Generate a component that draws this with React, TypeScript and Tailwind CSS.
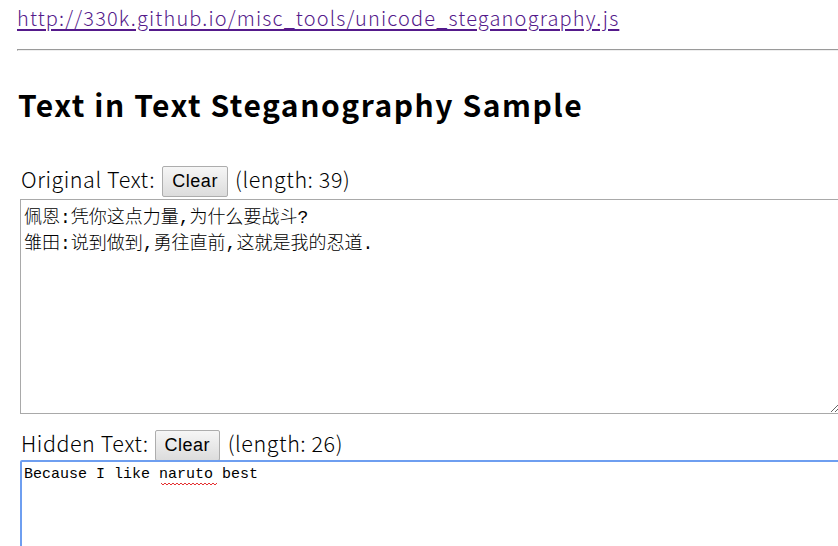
import React from "react";

const jp = { fontFamily: '"Noto Sans CJK JP", "Noto Sans", sans-serif' };

function ClearButton({ w }: { w: string }) {
  return (
    <button
      type="button"
      className={`${w} h-[31px] rounded-[2px] border border-[#adadad] bg-gradient-to-b from-[#f6f6f6] to-[#dcdcdc] text-[18px] leading-none text-black [font-family:'Liberation_Sans',Arial,sans-serif]`}
    >
      Clear
    </button>
  );
}

export default function App() {
  return (
    <div
      className="h-[546px] w-[838px] overflow-hidden bg-white text-black"
      style={jp}
    >
      <div className="h-[49px] pl-[17px] pt-[4px]">
        <a
          href="#"
          className="text-[20px] font-light leading-[28px] tracking-[1.15px] text-[#551a8b] underline decoration-[#551a8b] underline-offset-[3px]"
        >
          http://330k.github.io/misc_tools/unicode_steganography.js
        </a>
      </div>
      <div className="ml-[17px] h-[2px] border-t border-l border-[#9a9a9a] border-b border-b-[#eeeeee]" />
      <h1 className="ml-[18px] mt-[33px] text-[30px] font-bold leading-[40px] tracking-[1.55px]">
        Text in Text Steganography Sample
      </h1>
      <div className="ml-[21px] mt-[40px] flex h-[31px] items-center text-[21.5px] font-light tracking-[0.55px]">
        <span>Original Text:</span>
        <span className="ml-[7px]">
          <ClearButton w="w-[66px]" />
        </span>
        <span className="ml-[7px]">(length: 39)</span>
      </div>
      <textarea
        readOnly
        className="ml-[20px] mt-[4px] block h-[215px] w-[820px] resize-y border border-[#a9a9a9] px-[3px] pt-[5px] text-[18px] font-light leading-[26px] text-black outline-none"
        style={{ fontFamily: '"Liberation Mono", "Noto Sans CJK JP", sans-serif' }}
        defaultValue={"佩恩:凭你这点力量,为什么要战斗?\n雏田:说到做到,勇往直前,这就是我的忍道."}
      />
      <div className="ml-[21px] mt-[14px] flex h-[31px] items-center text-[21.5px] font-light tracking-[0.55px]">
        <span>Hidden Text:</span>
        <span className="ml-[6px]">
          <ClearButton w="w-[65px]" />
        </span>
        <span className="ml-[8px]">(length: 26)</span>
      </div>
      <div className="relative">
        <textarea
          readOnly
          className="ml-[20px] mt-[1px] block h-[120px] w-[820px] resize-y rounded-[2px] border-2 border-[#6e9ef0] px-[2px] pt-[2px] text-[15px] leading-[22px] text-black outline-none"
          style={{ fontFamily: '"Liberation Mono", monospace' }}
          defaultValue={"Because I like naruto best"}
        />
        <svg
          className="pointer-events-none absolute left-[161px] top-[22px]"
          width="56"
          height="4"
          viewBox="0 0 56 4"
        >
          <polyline
            points="0,1 2,3 4,1 6,3 8,1 10,3 12,1 14,3 16,1 18,3 20,1 22,3 24,1 26,3 28,1 30,3 32,1 34,3 36,1 38,3 40,1 42,3 44,1 46,3 48,1 50,3 52,1 54,3 56,1"
            fill="none"
            stroke="#e53030"
            strokeWidth="1"
          />
        </svg>
      </div>
    </div>
  );
}
